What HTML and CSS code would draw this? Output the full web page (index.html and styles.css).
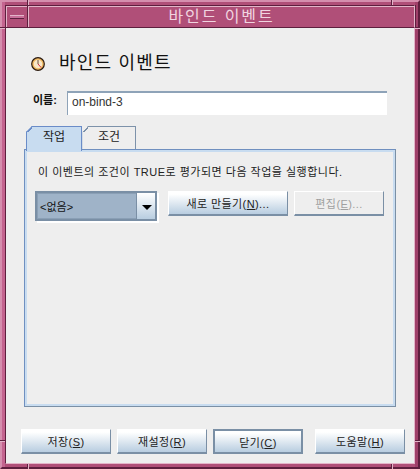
FILE: index.html
```html
<!DOCTYPE html>
<html lang="ko">
<head>
<meta charset="utf-8">
<title>바인드 이벤트</title>
<link rel="stylesheet" href="styles.css">
</head>
<body>
<div class="window">
  <span class="notch notch-v notch-top-left"></span>
  <span class="notch notch-v notch-top-right"></span>
  <span class="notch notch-v notch-bottom-left"></span>
  <span class="notch notch-v notch-bottom-right"></span>
  <span class="notch notch-h notch-left-top"></span>
  <span class="notch notch-h notch-left-bottom"></span>
  <span class="notch notch-h notch-right-top"></span>
  <span class="notch notch-h notch-right-bottom"></span>
  <div class="titlebar">
    <div class="menu-btn"><span class="menu-dash"></span></div>
    <div class="title">바인드 이벤트</div>
  </div>
  <div class="content">
    <div class="heading">
      <svg class="clock" width="14" height="14" viewBox="0 0 14 14">
        <circle cx="7" cy="7" r="6.3" fill="#f0b860" stroke="#2a1a10" stroke-width="1.2"/>
        <circle cx="7" cy="7" r="4.3" fill="#f9e8c8"/>
        <path d="M7 3v4" stroke="#6a5040" stroke-width="1" fill="none"/>
        <path d="M7 7l3 3.4" stroke="#d02848" stroke-width="1" fill="none"/>
      </svg>
      <h1 class="heading-text">바인드 이벤트</h1>
    </div>
    <div class="name-row">
      <label class="name-label">이름:</label>
      <div class="name-input">on-bind-3</div>
    </div>
    <div class="tabs">
      <div class="tab tab-active">작업</div>
      <div class="tab tab-idle">조건</div>
    </div>
    <div class="panel">
      <p class="panel-text">이 이벤트의 조건이 TRUE로 평가되면 다음 작업을 실행합니다.</p>
      <div class="panel-row">
        <div class="combo">
          <div class="combo-value">&lt;없음&gt;</div>
          <div class="combo-arrow"><span class="arrow"></span></div>
        </div>
        <button class="btn btn-new">새로 만들기(<u>N</u>)...</button>
        <button class="btn btn-edit" disabled>편집(<u>E</u>)...</button>
      </div>
    </div>
    <div class="actions">
      <button class="btn btn-action">저장(<u>S</u>)</button>
      <button class="btn btn-action">재설정(<u>R</u>)</button>
      <button class="btn btn-action btn-focus">닫기(<u>C</u>)</button>
      <button class="btn btn-action">도움말(<u>H</u>)</button>
    </div>
  </div>
</div>
</body>
</html>
```
FILE: styles.css
```css
* { box-sizing: border-box; }
html, body { margin: 0; padding: 0; }
body { width: 420px; height: 469px; overflow: hidden; font-family: "Liberation Sans", "Noto Sans CJK KR", sans-serif; font-size: 11px; color: #222; }

.window {
  position: relative;
  width: 420px; height: 469px;
  background: linear-gradient(90deg, #c4648f 3px, transparent 3px), linear-gradient(270deg, #a0406a 3px, transparent 3px), #b04f78;
  padding: 3px;
  border-style: solid;
  border-width: 2px;
  border-color: #d58fae #5e1f3e #5e1f3e #d58fae;
  display: flex; flex-direction: column;
}

.notch { position: absolute; background: #e3b5c9; }
.notch-v { width: 1px; box-shadow: -1px 0 0 #5e1f3e; }
.notch-h { height: 1px; box-shadow: 0 -1px 0 #5e1f3e; }
.notch-top-left { left: 26px; top: -2px; height: 5px; }
.notch-top-right { left: 390px; top: -2px; height: 5px; }
.notch-bottom-left { left: 26px; top: 462px; height: 5px; }
.notch-bottom-right { left: 390px; top: 462px; height: 5px; }
.notch-left-top { left: -2px; top: 26px; width: 5px; }
.notch-left-bottom { left: -2px; top: 439px; width: 5px; }
.notch-right-top { left: 413px; top: 26px; width: 5px; }
.notch-right-bottom { left: 413px; top: 439px; width: 5px; }

.titlebar {
  height: 23px; flex: none;
  display: flex;
  background: #b04f78;
  border-style: solid;
  border-width: 1px;
  border-color: #5e1f3e #e3b5c9 #5e1f3e #5e1f3e;
  box-shadow: inset 1px 1px 0 #e3b5c9, 1px 0 0 #5e1f3e;
}
.menu-btn { width: 23px; flex: none; display: flex; align-items: center; justify-content: center; border-right: 1px solid #e3b5c9; box-shadow: inset -1px 0 0 #5e1f3e; }
.menu-dash { display: block; width: 14px; height: 4px; background: #c8709a; border-top: 1px solid #e3b5c9; border-bottom: 1px solid #5e1f3e; }
.title { flex: 1; text-align: center; color: #f0d4e0; font-size: 16px; line-height: 22px; letter-spacing: 1.9px; }

.content {
  flex: 1;
  background: #eeeeee;
  border-style: solid;
  border-width: 0 1px 1px 1px;
  border-color: #e3b5c9 #e3b5c9 #e3b5c9 #5e1f3e;
  padding: 0 0 0 18px;
  display: flex; flex-direction: column;
}

.heading { display: flex; align-items: center; height: 28px; margin: 21px 0 0 7px; }
.clock { display: block; flex: none; margin-top: 2px; }
.heading-text { margin: 0 0 0 14px; font-size: 18px; font-weight: 400; color: #111; letter-spacing: 1.2px; line-height: 28px; }

.name-row { display: flex; align-items: flex-start; margin-top: 14px; height: 24px; }
.name-label { width: 43px; padding-left: 9px; font-size: 11px; line-height: 18px; font-weight: 700; color: #111; }
.name-input {
  width: 320px; height: 24px;
  background: #fff;
  border-top: 2px solid #8ea3b8;
  border-left: 1px solid #8ea3b8;
  padding: 0 0 0 4px;
  font-size: 12px; line-height: 18px; color: #333;
}

.tabs { display: flex; align-items: flex-start; margin: 11px 0 -1px 2px; height: 24px; position: relative; z-index: 1; }
.tab { position: relative; text-align: center; font-size: 12px; line-height: 21px; color: #222; border: 1px solid #7d92aa; border-bottom: none; clip-path: polygon(6px 0, 100% 0, 100% 100%, 0 100%, 0 6px); }
.tab::before {
  content: "";
  position: absolute; left: -1px; top: -1px;
  width: 6px; height: 6px;
  background: linear-gradient(135deg, transparent 50%, #7d92aa 50%, #7d92aa 70%, transparent 70%);
}
.tab-active { width: 56px; height: 25px; background: #c8dcf0; border-color: #6a8cc8; }
.tab-active::before { background: linear-gradient(135deg, transparent 50%, #6a8cc8 50%, #6a8cc8 70%, transparent 70%); }
.tab-idle { width: 54px; height: 23px; background: #eeeeee; border-left-color: #d4dce4; }

.panel {
  width: 372px; height: 258px;
  border: 1px solid;
  border-color: #6f8fbf #7a8fa5 #7a8fa5 #6f8fbf;
  box-shadow: inset 0 0 0 2px #c8dcf0;
  padding: 13px 10px 0 10px;
}
.panel-text { margin: 0; font-size: 11px; line-height: 18px; color: #222; letter-spacing: 0.5px; padding-left: 3px; }
.panel-row { display: flex; align-items: flex-start; margin-top: 10px; }

.combo {
  width: 122px; height: 30px; display: flex;
  background: #9fb3c8;
  border: 2px solid #7a8fa5;
  box-shadow: 2px 2px 0 #fff;
  flex: none;
}
.combo-value { flex: 1; font-size: 11px; line-height: 26px; padding-left: 2px; color: #111; border: 1px solid #8a9fb5; border-right: 0; }
.combo-arrow { width: 19px; flex: none; background: linear-gradient(#fff, #b8cde0); border-left: 1px solid #7a8fa5; display: flex; align-items: center; justify-content: center; padding: 2px 0 0 1px; }
.arrow { display: block; width: 0; height: 0; border-left: 5px solid transparent; border-right: 5px solid transparent; border-top: 5px solid #000; }

.btn {
  display: block;
  font-family: inherit; font-size: 11px; color: #222;
  height: 25px; padding: 0;
  background: linear-gradient(#ffffff 10%, #b8cde0);
  border-style: solid;
  border-width: 1px 1px 2px 1px;
  border-color: #fff #7a8fa5 #7a8fa5 #fff;
  letter-spacing: 0.4px;
}
.btn-new { width: 120px; margin-left: 11px; }
.btn-edit { width: 90px; margin-left: 6px; background: #eeeeee; color: #a0a0a0; }

.actions { display: flex; margin-top: 22px; margin-left: -3px; }
.btn-action { width: 90px; margin-right: 6px; }
.btn-focus { border: 2px solid #7a8fa5; margin-right: 12px; }
```
